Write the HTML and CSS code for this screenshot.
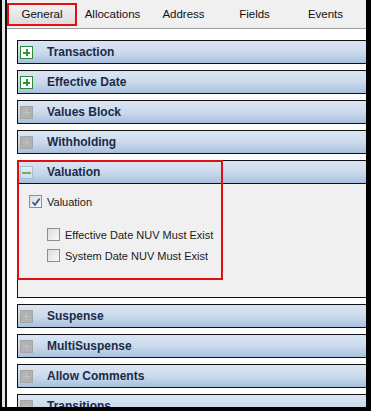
FILE: index.html
```html
<!DOCTYPE html>
<html lang="en">
<head>
  <meta charset="UTF-8">
  <title>General</title>
  <link rel="stylesheet" href="styles.css">
</head>
<body>
  <div class="frame">
    <div class="window">
      <!-- Tab strip -->
      <div class="tabs">
        <div class="tab active">General</div>
        <div class="tab">Allocations</div>
        <div class="tab">Address</div>
        <div class="tab">Fields</div>
        <div class="tab">Events</div>
      </div>

      <!-- Sections -->
      <div class="content">
        <div class="section">
          <div class="section-head"><span class="toggle plus"></span>Transaction</div>
        </div>
        <div class="section">
          <div class="section-head"><span class="toggle plus"></span>Effective Date</div>
        </div>
        <div class="section">
          <div class="section-head"><span class="toggle off"></span>Values Block</div>
        </div>
        <div class="section">
          <div class="section-head"><span class="toggle off"></span>Withholding</div>
        </div>
        <div class="section open">
          <div class="section-head"><span class="toggle minus"></span>Valuation</div>
          <div class="section-body">
            <label class="check-row">
              <span class="checkbox checked">
                <svg width="10" height="10" viewBox="0 0 10 10"><path d="M1.5 5.2 L4 7.8 L8.6 1.6" fill="none" stroke="#3a5aa8" stroke-width="1.8"/></svg>
              </span>
              Valuation
            </label>
            <div class="sub-checks">
              <label class="check-row"><span class="checkbox"></span>Effective Date NUV Must Exist</label>
              <label class="check-row"><span class="checkbox"></span>System Date NUV Must Exist</label>
            </div>
          </div>
          <div class="highlight"></div>
        </div>
        <div class="section">
          <div class="section-head"><span class="toggle off"></span>Suspense</div>
        </div>
        <div class="section">
          <div class="section-head"><span class="toggle off"></span>MultiSuspense</div>
        </div>
        <div class="section">
          <div class="section-head"><span class="toggle off"></span>Allow Comments</div>
        </div>
        <div class="section">
          <div class="section-head"><span class="toggle off"></span>Transitions</div>
        </div>
      </div>
    </div>
  </div>
</body>
</html>
```

FILE: styles.css
```css
html, body {
  margin: 0;
  padding: 0;
  background: #000;
  height: 411px;
  overflow: hidden;
}
.frame {
  height: 407px;
  margin: 0 5px 0 2px;
  background: #e4e4e4;
  padding-left: 3px;
  overflow: hidden;
  font-family: "Liberation Sans", Arial, sans-serif;
}
.window {
  height: 100%;
  border-left: 2px solid #111;
  background: #fff;
  overflow: hidden;
}
.tabs {
  display: flex;
  height: 28px;
  align-items: center;
  background: #f0f0f0;
  border-bottom: 1px solid #a0a0a0;
  font-size: 11.5px;
  color: #111;
}
.tab {
  width: 71px;
  text-align: center;
  line-height: 21px;
}
.tab.active {
  background: linear-gradient(#f2f2f2, #dcdcdc);
  border: 2px solid #e01010;
  width: 66px;
  line-height: 19px;
}
.content {
  display: flex;
  flex-direction: column;
  gap: 6px;
  padding: 11px 0 0 10px;
}
.section {
  position: relative;
}
.section-head {
  display: flex;
  align-items: center;
  height: 22px;
  border: 1px solid #111;
  border-right: none;
  background: linear-gradient(#dbe6f3, #c9d9ec 55%, #a8bfdc);
  font-size: 12px;
  font-weight: bold;
  color: #1b2a47;
}
.toggle {
  position: relative;
  box-sizing: border-box;
  width: 13px;
  height: 13px;
  margin: 0 14px 0 2px;
}
.toggle.plus {
  background: #fff;
  border: 1px solid #2d8a3a;
}
.toggle.plus::before,
.toggle.plus::after {
  content: "";
  position: absolute;
  background: #2a9a32;
}
.toggle.plus::before { left: 2px; top: 5px; width: 7px; height: 1px; box-shadow: 0 1px 0 #2a9a32; }
.toggle.plus::after { left: 5px; top: 2px; width: 1px; height: 7px; box-shadow: 1px 0 0 #2a9a32; }
.toggle.off {
  background: #b2b2b2;
  border: 1px solid #a6a6a6;
}
.toggle.off::before,
.toggle.off::after {
  content: "";
  position: absolute;
  background: #c4c4c4;
}
.toggle.off::before { left: 2px; top: 5px; width: 7px; height: 1px; }
.toggle.off::after { left: 5px; top: 2px; width: 1px; height: 7px; }
.toggle.minus {
  background: linear-gradient(#e4ecf6, #cdddef);
  border: 1px solid #a9bfdc;
}
.toggle.minus::before {
  content: "";
  position: absolute;
  left: 1px;
  top: 5px;
  width: 9px;
  height: 2px;
  background: #79a860;
}
.section-body {
  height: 102px;
  background: #f0f0f0;
  border: 1px solid #111;
  border-top: none;
  border-right: none;
  padding: 11px 0 0 11px;
  font-size: 11px;
  color: #1a1a1a;
}
.check-row {
  display: flex;
  align-items: center;
  gap: 5px;
  height: 13px;
}
.checkbox {
  box-sizing: border-box;
  display: flex;
  align-items: center;
  justify-content: center;
  width: 13px;
  height: 13px;
  border: 1px solid #8e8f8f;
  background: linear-gradient(135deg, #dcdcdc, #fafafa);
}
.sub-checks {
  display: flex;
  flex-direction: column;
  gap: 8px;
  margin: 20px 0 0 18px;
}
.highlight {
  position: absolute;
  left: 0;
  top: 0;
  width: 206px;
  height: 120px;
  box-sizing: border-box;
  border: 2px solid #e01010;
  pointer-events: none;
}
```
